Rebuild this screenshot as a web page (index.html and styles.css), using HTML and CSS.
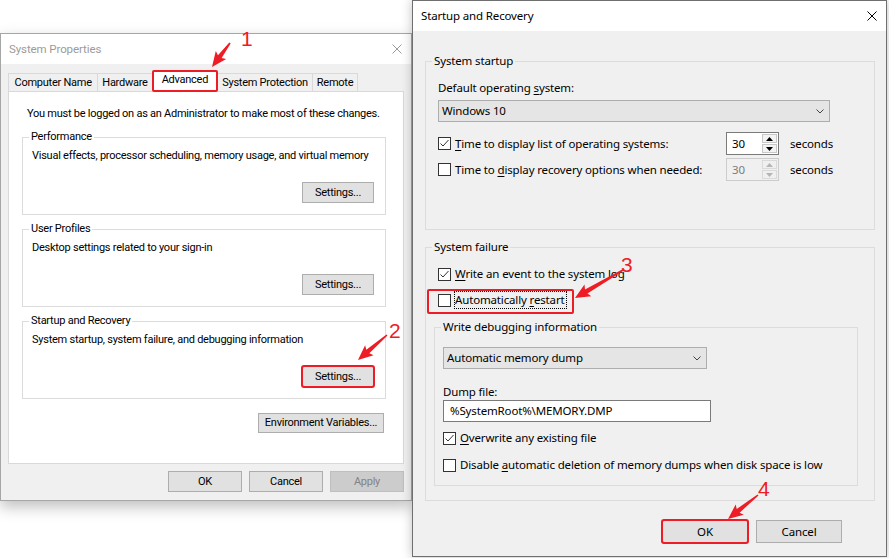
FILE: index.html
```html
<!DOCTYPE html>
<html>
<head>
<meta charset="utf-8">
<title>System Properties - Startup and Recovery</title>
<link rel="stylesheet" href="styles.css">
</head>
<body>
<section class="win sysprop">
  <header class="titlebar">
    <span class="title">System Properties</span>
    <span class="close"><svg width="10" height="10" viewBox="0 0 10 10"><path d="M0.5 0.5L9.5 9.5M9.5 0.5L0.5 9.5" stroke="#9a9a9a" stroke-width="1" fill="none"/></svg></span>
  </header>
  <div class="body">
    <div class="tabs">
      <div class="tab">Computer Name</div>
      <div class="tab">Hardware</div>
      <div class="tab sel mark">Advanced</div>
      <div class="tab">System Protection</div>
      <div class="tab">Remote</div>
    </div>
    <div class="panel">
      <p class="note">You must be logged on as an Administrator to make most of these changes.</p>
      <fieldset class="group lgroup">
        <legend>Performance</legend>
        <p class="desc">Visual effects, processor scheduling, memory usage, and virtual memory</p>
        <div class="btnrow"><button class="btn settings">Settings...</button></div>
      </fieldset>
      <fieldset class="group lgroup">
        <legend>User Profiles</legend>
        <p class="desc">Desktop settings related to your sign-in</p>
        <div class="btnrow"><button class="btn settings">Settings...</button></div>
      </fieldset>
      <fieldset class="group lgroup">
        <legend>Startup and Recovery</legend>
        <p class="desc">System startup, system failure, and debugging information</p>
        <div class="btnrow"><button class="btn settings mark">Settings...</button></div>
      </fieldset>
      <div class="envrow"><button class="btn env">Environment Variables...</button></div>
    </div>
    <div class="dlgbtns">
      <button class="btn">OK</button>
      <button class="btn">Cancel</button>
      <button class="btn" disabled>Apply</button>
    </div>
  </div>
</section>

<section class="win sr">
  <header class="titlebar">
    <span class="title">Startup and Recovery</span>
    <span class="close"><svg width="10" height="10" viewBox="0 0 10 10"><path d="M0.5 0.5L9.5 9.5M9.5 0.5L0.5 9.5" stroke="#000" stroke-width="1" fill="none"/></svg></span>
  </header>
  <div class="body">
    <fieldset class="group startup">
      <legend>System startup</legend>
      <div class="lbl">Default operating <u>s</u>ystem:</div>
      <div class="select os"><span>Windows 10</span><svg width="8" height="5" viewBox="0 0 8 5"><path d="M0.5 0.5L4 4L7.5 0.5" stroke="#444" fill="none"/></svg></div>
      <div class="row">
        <div class="cbl"><span class="cb"><svg width="11" height="11" viewBox="0 0 11 11"><path d="M1.5 5.5L4 8L9.5 2" stroke="#333" stroke-width="1" fill="none"/></svg></span><span><u>T</u>ime to display list of operating systems:</span></div>
        <div class="spin"><span class="val">30</span><span class="arrows"><span><svg width="7" height="4" viewBox="0 0 7 4"><path d="M0 4L3.5 0L7 4Z" fill="#000"/></svg></span><span><svg width="7" height="4" viewBox="0 0 7 4"><path d="M0 0L3.5 4L7 0Z" fill="#000"/></svg></span></span></div>
        <span class="secs">seconds</span>
      </div>
      <div class="row">
        <div class="cbl"><span class="cb"></span><span>Time to <u>d</u>isplay recovery options when needed:</span></div>
        <div class="spin off"><span class="val">30</span><span class="arrows"><span><svg width="7" height="4" viewBox="0 0 7 4"><path d="M0 4L3.5 0L7 4Z" fill="#b5b5b5"/></svg></span><span><svg width="7" height="4" viewBox="0 0 7 4"><path d="M0 0L3.5 4L7 0Z" fill="#b5b5b5"/></svg></span></span></div>
        <span class="secs">seconds</span>
      </div>
    </fieldset>

    <fieldset class="group failure">
      <legend>System failure</legend>
      <div class="crow first"><span class="cb"><svg width="11" height="11" viewBox="0 0 11 11"><path d="M1.5 5.5L4 8L9.5 2" stroke="#333" stroke-width="1" fill="none"/></svg></span><span><u>W</u>rite an event to the system log</span></div>
      <div class="crow restart"><span class="cb"></span><span class="focus">Automatically <u>r</u>estart</span></div>
      <fieldset class="group dbg">
        <legend>Write debugging information</legend>
        <div class="select dump"><span>Automatic memory dump</span><svg width="8" height="5" viewBox="0 0 8 5"><path d="M0.5 0.5L4 4L7.5 0.5" stroke="#444" fill="none"/></svg></div>
        <div class="lbl dlbl">Dump file:</div>
        <div class="path">%SystemRoot%\MEMORY.DMP</div>
        <div class="crow ow"><span class="cb"><svg width="11" height="11" viewBox="0 0 11 11"><path d="M1.5 5.5L4 8L9.5 2" stroke="#333" stroke-width="1" fill="none"/></svg></span><span><u>O</u>verwrite any existing file</span></div>
        <div class="crow dis"><span class="cb"></span><span>Disable <u>a</u>utomatic deletion of memory dumps when disk space is low</span></div>
      </fieldset>
    </fieldset>

    <div class="srbtns">
      <button class="btn mark">OK</button>
      <button class="btn">Cancel</button>
    </div>
  </div>
</section>

<svg class="annot" width="889" height="558" viewBox="0 0 889 558">
  <g fill="#ee1c25">
    <polygon transform="translate(230 43) rotate(126.87)" points="0,-0.8 17,-2.3 15,-6.5 30,0 15,6.5 17,2.3 0,0.8"/>
    <polygon transform="translate(387 335) rotate(139.24)" points="0,-0.8 25.3,-2.3 23.3,-6.5 38.3,0 23.3,6.5 25.3,2.3 0,0.8"/>
    <polygon transform="translate(623 270) rotate(149.74)" points="0,-0.8 42.6,-2.4 40.6,-6.8 55.6,0 40.6,6.8 42.6,2.4 0,0.8"/>
    <polygon transform="translate(758 495) rotate(141.34)" points="0,-0.8 25.4,-2.3 23.4,-6.5 38.4,0 23.4,6.5 25.4,2.3 0,0.8"/>
    <text x="241" y="46" class="num">1</text>
    <text x="389" y="338" class="num">2</text>
    <text x="621" y="272" class="num">3</text>
    <text x="758" y="496" class="num">4</text>
  </g>
</svg>
</body>
</html>
```

FILE: styles.css
```css
* { box-sizing: border-box; }
html, body { margin: 0; padding: 0; }
body {
  position: relative;
  width: 889px;
  height: 558px;
  overflow: hidden;
  background: #fff;
  font-family: "Noto Sans", "DejaVu Sans", sans-serif;
  font-size: 11.5px;
  letter-spacing: -0.15px;
  line-height: 16px;
  color: #000;
}
p { margin: 0; }
u { text-decoration-thickness: 1px; text-underline-offset: 2px; }

/* windows on the desktop */
.win {
  position: absolute;
  display: flex;
  flex-direction: column;
  background: #f0f0f0;
}
.sysprop {
  left: 0;
  top: 33px;
  width: 412px;
  height: 468px;
  border: 1px solid #a6a6a6;
  box-shadow: 0 6px 14px rgba(0, 0, 0, 0.25);
  font-family: Roboto, "Noto Sans", sans-serif;
  font-size: 11px;
  letter-spacing: -0.25px;
}
.sr {
  left: 412px;
  top: 0;
  width: 475px;
  height: 557px;
  border: 1px solid #6f6f6f;
  box-shadow: 0 0 10px rgba(0, 0, 0, 0.25);
  z-index: 2;
}
.titlebar {
  flex: none;
  height: 30px;
  background: #fff;
  display: flex;
  align-items: center;
  justify-content: space-between;
  padding: 0 9px 0 8px;
}
.sysprop .title { color: #9b9b9b; font-size: 11.5px; letter-spacing: -0.1px; }
.close svg { display: block; }

/* left dialog */
.sysprop .body {
  flex: 1;
  padding: 6px 7px 0 7px;
}
.tabs {
  display: flex;
  align-items: flex-end;
  height: 21px;
}
.tab {
  height: 18px;
  line-height: 17px;
  padding: 0 4px;
  border: 1px solid #d9d9d9;
  border-bottom: none;
  background: #f0f0f0;
  margin-right: -1px;
  white-space: nowrap;
}
.tab:first-child { padding: 0 5.5px; }
.tab.sel {
  position: relative;
  z-index: 1;
  height: 22px;
  margin-bottom: -1px;
  padding: 0 9px;
  background: #fff;
  line-height: 18px;
}
.panel {
  height: 373px;
  background: #fff;
  border: 1px solid #d9d9d9;
  padding: 14px 17px 0 13px;
}
.note { margin: 0 0 7px 5px; white-space: nowrap; }

.group {
  margin: 0;
  min-width: 0;
  border: 1px solid #dcdcdc;
}
.group legend { padding: 0 2px; line-height: 16px; }

.lgroup {
  margin-bottom: 6px;
  padding: 0 11px 11px 9px;
}
.lgroup legend { margin-left: -3px; }
.desc { margin: 3px 0 18px; white-space: nowrap; }
.btnrow { display: flex; justify-content: flex-end; }

.btn {
  font: inherit;
  letter-spacing: inherit;
  color: #000;
  height: 20px;
  padding: 0;
  line-height: 18px;
  background: #e1e1e1;
  border: 1px solid #adadad;
  white-space: nowrap;
}
.btn:disabled { background: #cccccc; border-color: #bfbfbf; color: #838383; }
.settings { width: 72px; height: 21px; }
.envrow { display: flex; justify-content: flex-end; margin: 14px 2px 0 0; }
.env { width: 126px; }
.dlgbtns {
  display: flex;
  justify-content: flex-end;
  gap: 7px;
  margin-top: 7px;
}
.dlgbtns .btn { width: 74px; height: 21px; }

/* annotation boxes */
.mark { outline: 2px solid #ee1c25; outline-offset: -1px; border-radius: 2px; }
.tab.mark { outline-offset: -2px; }

/* right dialog */
.sr .body {
  flex: 1;
  padding: 22px 11px 0 12px;
}
.startup { padding: 0 12px 48px 12px; }
.startup legend, .failure legend { margin-left: -6px; }
.lbl { margin: 11px 0 4px; }
.select {
  display: flex;
  align-items: center;
  justify-content: space-between;
  height: 22px;
  background: #e5e5e5;
  border: 1px solid #adadad;
  padding: 0 5px 0 3px;
}
.select svg { display: block; }
.os { width: 392px; }
.row {
  display: flex;
  align-items: center;
  height: 23px;
  margin-top: 3px;
}
.os + .row { margin-top: 10px; }
.cbl {
  display: flex;
  align-items: center;
  gap: 4px;
  width: 288px;
  white-space: nowrap;
}
.cb {
  flex: none;
  width: 13px;
  height: 13px;
  border: 1px solid #333;
  background: #fff;
}
.cb svg { display: block; }
.spin {
  display: flex;
  width: 53px;
  height: 23px;
  border: 1px solid #7a7a7a;
  background: #fff;
}
.spin .val { flex: 1; padding-left: 5px; line-height: 21px; }
.spin .arrows {
  width: 17px;
  display: flex;
  flex-direction: column;
  padding: 1px;
  gap: 1px;
}
.spin .arrows span {
  flex: 1;
  display: flex;
  align-items: center;
  justify-content: center;
  background: #f3f3f3;
  border: 1px solid #c8c8c8;
}
.spin .arrows svg { display: block; }
.spin.off { border-color: #cccccc; background: #f0f0f0; color: #7d7d7d; }
.spin.off .arrows span { border-color: #dadada; background: #f0f0f0; }
.secs { margin-left: 11px; }

.failure {
  margin-top: 9px;
  padding: 0 12px 14px 12px;
}
.crow {
  display: flex;
  align-items: center;
  gap: 4px;
  height: 16px;
  margin-top: 10px;
  white-space: nowrap;
}
.crow.first { margin-top: 11px; }
.restart { position: relative; width: max-content; }
.restart::after {
  content: "";
  position: absolute;
  top: -3px;
  left: -11px;
  right: -8px;
  bottom: -6px;
  border: 2px solid #ee1c25;
  border-radius: 2px;
}
.focus { outline: 1px dotted #000; outline-offset: 0; padding-right: 1px; }

.dbg {
  margin: 11px 4px 0 -4px;
  padding: 0 8px 12px 8px;
}
.dbg legend { margin-left: -2px; }
.dump { width: 264px; margin-top: 12px; }
.dlbl { margin: 15px 0 0; }
.path {
  width: 268px;
  height: 22px;
  background: #fff;
  border: 1px solid #7a7a7a;
  padding-left: 6px;
  line-height: 20px;
}
.crow.ow { margin-top: 8px; }
.crow.dis { margin-top: 11px; }

.srbtns {
  display: flex;
  justify-content: flex-end;
  gap: 8px;
  margin: 19px 33px 0 0;
}
.srbtns .btn { width: 86px; height: 23px; }

/* red annotation overlay */
.annot {
  position: absolute;
  left: 0;
  top: 0;
  z-index: 10;
  pointer-events: none;
}
.num {
  font-family: "Liberation Sans", Arial, sans-serif;
  font-size: 21px;
  letter-spacing: 0;
}
```
